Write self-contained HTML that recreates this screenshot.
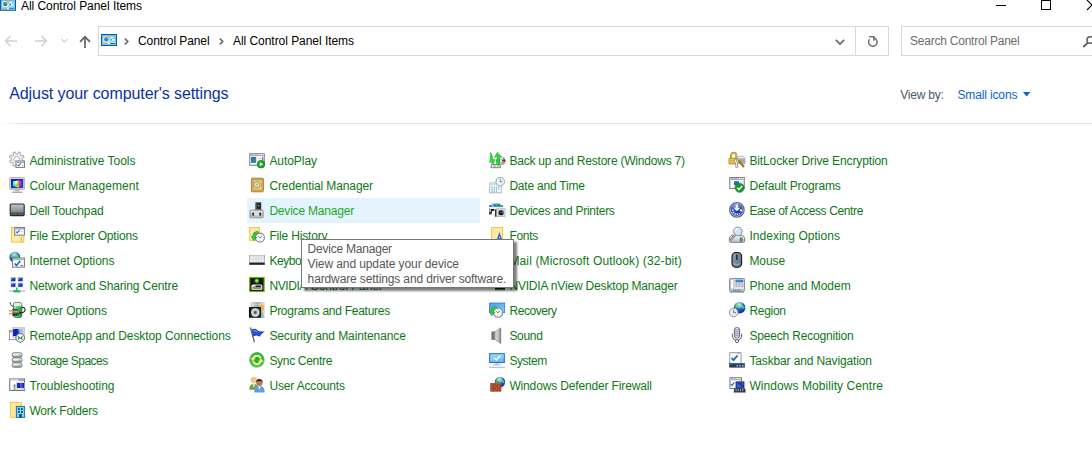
<!DOCTYPE html>
<html><head><meta charset="utf-8"><title>All Control Panel Items</title>
<style>
html,body{margin:0;padding:0;background:#fff;}
body{width:1092px;height:464px;position:relative;overflow:hidden;font-family:"Liberation Sans",sans-serif;font-size:12px;}
.t{position:absolute;white-space:pre;line-height:14px;height:14px;}
.it{color:#0e7816;}
.ic{position:absolute;width:16px;height:16px;overflow:visible;}
.abs{position:absolute;}
</style></head><body>

<svg width="0" height="0" style="position:absolute"><defs>
<linearGradient id="cpg" x1="0" y1="0" x2="0" y2="1"><stop offset="0" stop-color="#7cc8fa"/><stop offset="1" stop-color="#b9e3fd"/></linearGradient>
<radialGradient id="gl" cx="0.45" cy="0.3" r="0.75"><stop offset="0" stop-color="#5cc0ff"/><stop offset="0.5" stop-color="#1c54dc"/><stop offset="1" stop-color="#0a2490"/></radialGradient><radialGradient id="glh" cx="0.45" cy="0.22" r="0.4"><stop offset="0" stop-color="#fff" stop-opacity="0.7"/><stop offset="1" stop-color="#fff" stop-opacity="0"/></radialGradient>
</defs></svg>
<!-- title bar icon -->
<svg class="abs" style="left:0;top:0" width="16" height="11" viewBox="0 0 16 11"><g transform="translate(0 -1.2)"><rect x="0.5" y="0.5" width="15" height="11" fill="url(#cpg)" stroke="#0d5c9c"/><rect x="1.5" y="1.5" width="13" height="9" fill="none" stroke="#58b4f2" stroke-width="0.6"/><circle cx="5.3" cy="5.2" r="3" fill="#f4fbff"/><circle cx="5.3" cy="5.2" r="2.2" fill="#1b86de"/><path d="M5.6 4.8V1.9A3 3 0 0 1 8.5 4.8Z" fill="#fdb515"/><rect x="9.8" y="3" width="3.6" height="1.2" fill="#fff"/><rect x="12.2" y="3" width="1.2" height="1.2" fill="#f7941d"/><rect x="9.8" y="5.2" width="3.6" height="1.2" fill="#fff"/><rect x="9.8" y="5.2" width="1.2" height="1.2" fill="#1b86de"/><rect x="2" y="9" width="5" height="1" fill="#f7a21d"/><rect x="7" y="9" width="2" height="1" fill="#fff"/><rect x="9" y="9" width="5" height="1" fill="#1173d4"/></g></svg>
<!-- window buttons -->
<div class="abs" style="left:996px;top:5px;width:10px;height:1px;background:#000"></div>
<div class="abs" style="left:1041px;top:0;width:8px;height:8px;border:1px solid #000"></div>
<svg class="abs" style="left:1082px;top:0" width="10" height="12" viewBox="1082 0 10 12"><path d="M1087 0L1097 10M1087 10L1097 0" stroke="#000" stroke-width="1.1" fill="none"/></svg>
<!-- nav arrows -->
<svg class="abs" style="left:0;top:30px" width="98" height="22" viewBox="0 30 98 22">
<g fill="none" stroke="#d1d1d1" stroke-width="1.5"><path d="M5.5 41H17M10.5 36L5.5 41L10.5 46"/><path d="M35 41H46.5M41.5 36L46.5 41L41.5 46"/></g>
<path d="M61.5 39L64.5 42L67.5 39" fill="none" stroke="#d1d1d1" stroke-width="1.2"/>
<path d="M85 48V37M80 41.8L85 36.8L90 41.8" fill="none" stroke="#646464" stroke-width="1.7"/>
</svg>
<!-- address bar -->
<div class="abs" style="left:98px;top:26px;width:789px;height:28px;border:1px solid #d9d9d9;box-sizing:content-box"></div>
<div class="abs" style="left:855px;top:27px;width:1px;height:28px;background:#d9d9d9"></div>
<svg class="abs" style="left:101px;top:34px" width="16" height="12" viewBox="0 0 16 12"><g><rect x="0.5" y="0.5" width="15" height="11" fill="url(#cpg)" stroke="#0d5c9c"/><rect x="1.5" y="1.5" width="13" height="9" fill="none" stroke="#58b4f2" stroke-width="0.6"/><circle cx="5.3" cy="5.2" r="3" fill="#f4fbff"/><circle cx="5.3" cy="5.2" r="2.2" fill="#1b86de"/><path d="M5.6 4.8V1.9A3 3 0 0 1 8.5 4.8Z" fill="#fdb515"/><rect x="9.8" y="3" width="3.6" height="1.2" fill="#fff"/><rect x="12.2" y="3" width="1.2" height="1.2" fill="#f7941d"/><rect x="9.8" y="5.2" width="3.6" height="1.2" fill="#fff"/><rect x="9.8" y="5.2" width="1.2" height="1.2" fill="#1b86de"/><rect x="2" y="9" width="5" height="1" fill="#f7a21d"/><rect x="7" y="9" width="2" height="1" fill="#fff"/><rect x="9" y="9" width="5" height="1" fill="#1173d4"/></g></svg>
<svg class="abs" style="left:120px;top:34px" width="110" height="14" viewBox="120 34 110 14"><path d="M124.8 38.6L127.8 41.5L124.8 44.4" fill="none" stroke="#6a6a6a" stroke-width="1.6"/><path d="M219.8 38.6L222.8 41.5L219.8 44.4" fill="none" stroke="#6a6a6a" stroke-width="1.6"/></svg>
<svg class="abs" style="left:830px;top:30px" width="56" height="22" viewBox="830 30 56 22"><path d="M835.8 39.8L840 44L844.2 39.8" fill="none" stroke="#6a6a6a" stroke-width="1.7"/><path d="M873.8 37.8A4.3 4.3 0 1 1 869.6 39.2" fill="none" stroke="#6a6a6a" stroke-width="1.4"/><path d="M869.2 36.7H873.9V40.8" fill="none" stroke="#707070" stroke-width="1.6"/></svg>
<!-- search -->
<div class="abs" style="left:901px;top:26px;width:200px;height:28px;border:1px solid #d9d9d9"></div>
<svg class="abs" style="left:1080px;top:34px" width="12" height="14" viewBox="1080 34 12 14"><circle cx="1090.3" cy="40" r="3.3" fill="none" stroke="#5a5a5a" stroke-width="1.5"/><path d="M1087.8 42.6L1083.3 47" stroke="#5a5a5a" stroke-width="1.8"/></svg>
<!-- view by arrow -->
<svg class="abs" style="left:1020px;top:90px" width="12" height="8" viewBox="1020 90 12 8"><path d="M1023 92H1030.4L1026.7 96.6Z" fill="#0b64d0"/></svg>
<!-- separator -->
<div class="abs" style="left:0;top:123px;width:1092px;height:1px;background:linear-gradient(90deg,#fff 0,#dae6f4 24px,#dae6f4 100%)"></div>

<svg class="ic" style="left:9px;top:152px" viewBox="0 0 16 16"><path d="M12.92 5.84L15.22 6.11L15.22 8.29L12.92 8.56L12.38 9.86L13.82 11.67L12.27 13.22L10.46 11.78L9.16 12.32L8.89 14.62L6.71 14.62L6.44 12.32L5.14 11.78L3.33 13.22L1.78 11.67L3.22 9.86L2.68 8.56L0.38 8.29L0.38 6.11L2.68 5.84L3.22 4.54L1.78 2.73L3.33 1.18L5.14 2.62L6.44 2.08L6.71 -0.22L8.89 -0.22L9.16 2.08L10.46 2.62L12.27 1.18L13.82 2.73L12.38 4.54Z" fill="#f1f2f4" stroke="#a4aab2" stroke-width="0.9" transform="rotate(22.5 7.8 7.2)"/><circle cx="7.8" cy="7.2" r="2.7" fill="#fff" stroke="#a4aab2" stroke-width="0.9"/><rect x="7.05" y="9.05" width="8.4" height="6.4" fill="#fff" stroke="#7f838a" stroke-width="1.1"/><rect x="7.6" y="9.6" width="7.3" height="1.6" fill="#afb3ba"/><path d="M8.6 12.700000000000001L9.649999999999999 13.82L11.82 11.3" fill="none" stroke="#1b74c8" stroke-width="1.015"/><rect x="12.6" y="13" width="1.6" height="0.7" fill="#9aa0a8"/></svg>
<span class="t it" style="left:29.4px;top:153.84px;letter-spacing:-0.020px;">Administrative Tools</span>
<svg class="ic" style="left:9px;top:177px" viewBox="0 0 16 16"><defs><linearGradient id="cmA" x1="0" y1="0" x2="1" y2="0"><stop offset="0" stop-color="#22e8f0"/><stop offset="0.55" stop-color="#f4fff0"/><stop offset="1" stop-color="#ffa020"/></linearGradient><linearGradient id="cmB" x1="0.2" y1="0" x2="0.5" y2="1"><stop offset="0.35" stop-color="#30e030" stop-opacity="0"/><stop offset="0.8" stop-color="#40e828" stop-opacity="0.9"/><stop offset="1" stop-color="#f4f020"/></linearGradient><linearGradient id="cmC" x1="0" y1="0" x2="0" y2="1"><stop offset="0" stop-color="#f028f0"/><stop offset="1" stop-color="#e02030"/></linearGradient><linearGradient id="cmD" x1="0" y1="0" x2="1" y2="1"><stop offset="0" stop-color="#0a1ab0"/><stop offset="1" stop-color="#2a48e0"/></linearGradient></defs><rect x="0.600" y="0.600" width="15" height="12" rx="1" fill="#dad7cd" stroke="#b3b0a6" stroke-width="0.900"/><rect x="2" y="2" width="12.200" height="9.200" fill="url(#cmD)"/><path d="M3.900 4.200L9.900 3.500V10.400L3.900 8.800Z" fill="url(#cmA)"/><path d="M3.900 4.200L9.900 3.500V10.400L3.900 8.800Z" fill="url(#cmB)"/><path d="M9.900 3.500L12.300 4V8.600L9.900 10.400Z" fill="url(#cmC)"/><path d="M6.200 12.800h3.800l0.600 1.400h-5z" fill="#b4b1a8"/><path d="M3.600 14.200h9l1 1.400h-11z" fill="#c9c6bd"/><rect x="2.800" y="15.300" width="10.600" height="0.600" fill="#8f8c84"/></svg>
<span class="t it" style="left:29.4px;top:178.84px;letter-spacing:0.039px;">Colour Management</span>
<svg class="ic" style="left:9px;top:202px" viewBox="0 0 16 16"><defs><linearGradient id="tp1" x1="0" y1="0" x2="0" y2="1"><stop offset="0" stop-color="#c6c9ca"/><stop offset="0.6" stop-color="#8d9497"/><stop offset="1" stop-color="#444c50"/></linearGradient></defs><rect x="1.2" y="2" width="14" height="11.6" rx="1.2" fill="url(#tp1)" stroke="#1f2b30" stroke-width="1.1"/><path d="M1.5 11.2H15M8.2 11.2V13.4" stroke="#2a3438" stroke-width="0.6"/></svg>
<span class="t it" style="left:29.4px;top:203.84px;letter-spacing:-0.134px;">Dell Touchpad</span>
<svg class="ic" style="left:9px;top:227px" viewBox="0 0 16 16"><rect x="2.5" y="0.5" width="12.4" height="14.7" fill="#fde8a4" stroke="#f0c750"/><rect x="11.8" y="9.5" width="1.2" height="5.8" fill="#ecc04f"/><rect x="5.75" y="0.45000000000000007" width="9.700000000000001" height="7.700000000000001" fill="#fff" stroke="#7f838a" stroke-width="1.1"/><rect x="6.300000000000001" y="1.0" width="8.600000000000001" height="1.6" fill="#afb3ba"/><path d="M7.2 4.7L8.325 5.9L10.65 3.2" fill="none" stroke="#1b74c8" stroke-width="1.0875"/><rect x="12" y="4.5" width="1.8" height="0.7" fill="#9aa0a8"/></svg>
<span class="t it" style="left:29.4px;top:228.84px;letter-spacing:-0.174px;">File Explorer Options</span>
<svg class="ic" style="left:9px;top:252px" viewBox="0 0 16 16"><circle cx="5.8" cy="5.2" r="5.4" fill="url(#gl)"/><path d="M1.7499999999999991 2.77q1.62 -2.16 3.78 -2.16q0.27 2.16 -1.62 3.24q-0.54 2.43 -2.43 2.7q-0.81 -1.62 0.27 -3.78Z" fill="#2fc02c"/><path d="M7.42 2.2299999999999995q2.43 0.54 3.24 3.24q-1.89 1.62 -3.78 -0.27Z" fill="#3fd03c"/><circle cx="5.8" cy="5.2" r="5.4" fill="url(#glh)"/><rect x="3.55" y="6.05" width="11.9" height="9.1" fill="#fff" stroke="#7f838a" stroke-width="1.1"/><rect x="4.1" y="6.6" width="10.8" height="1.6" fill="#afb3ba"/><path d="M5.6 11.5L7.475 13.5L11.35 9" fill="none" stroke="#1b74c8" stroke-width="1.8125"/><rect x="11.400" y="13" width="2.600" height="0.900" fill="#6a5aa0"/></svg>
<span class="t it" style="left:29.4px;top:253.84px;letter-spacing:-0.018px;">Internet Options</span>
<svg class="ic" style="left:9px;top:277px" viewBox="0 0 16 16"><rect x="1.2" y="0" width="6" height="5" fill="#dde1e8"/><rect x="2.0" y="0.8" width="4.4" height="3.4" fill="#1a32c8"/><path d="M2.0 0.8h3l-3 2.4z" fill="#5d86ea"/><rect x="8.4" y="0" width="6" height="5" fill="#dde1e8"/><rect x="9.200000000000001" y="0.8" width="4.4" height="3.4" fill="#1a32c8"/><path d="M9.200000000000001 0.8h3l-3 2.4z" fill="#5d86ea"/><rect x="1.2" y="5.6" width="6" height="5" fill="#dde1e8"/><rect x="2.0" y="6.3999999999999995" width="4.4" height="3.4" fill="#1a32c8"/><path d="M2.0 6.3999999999999995h3l-3 2.4z" fill="#5d86ea"/><rect x="8.4" y="5.6" width="6" height="5" fill="#dde1e8"/><rect x="9.200000000000001" y="6.3999999999999995" width="4.4" height="3.4" fill="#1a32c8"/><path d="M9.200000000000001 6.3999999999999995h3l-3 2.4z" fill="#5d86ea"/><rect x="0" y="13.3" width="16" height="1.6" fill="#c9ced4"/><path d="M7 10.6h1.6v2.4h2.6v2.4H4.4v-2.4H7z" fill="#1fbf63"/></svg>
<span class="t it" style="left:29.4px;top:278.84px;letter-spacing:-0.109px;">Network and Sharing Centre</span>
<svg class="ic" style="left:9px;top:302px" viewBox="0 0 16 16"><defs><linearGradient id="pw1" x1="0" y1="0" x2="1" y2="0"><stop offset="0" stop-color="#38b046"/><stop offset="0.18" stop-color="#b4f0b4"/><stop offset="0.4" stop-color="#4ccc58"/><stop offset="1" stop-color="#1f9a30"/></linearGradient><linearGradient id="pw2" x1="0" y1="0" x2="0" y2="1"><stop offset="0" stop-color="#3a3a3a"/><stop offset="0.35" stop-color="#a4a4a4"/><stop offset="0.7" stop-color="#4a4a4a"/><stop offset="1" stop-color="#151515"/></linearGradient></defs><path d="M1 0.400q0.200 2.400 1.800 3.200q1.400 0.600 2.200 1.400" fill="none" stroke="#222" stroke-width="0.900"/><rect x="4.300" y="0.400" width="8.600" height="15.200" rx="2.800" fill="url(#pw1)" stroke="#1c5e26" stroke-width="0.700"/><path d="M4.700 4.200v-1.200q0 -2.300 2.600 -2.300h2.600q2.600 0 2.600 2.300v1.200z" fill="#ece8f6"/><path d="M4.700 4.200h7.800" stroke="#8fd09a" stroke-width="0.500"/><path d="M10 10.600q3.400 0.800 5.600 -1.200q1.200 -1.800 -0.200 -3.400q-1 -0.800 -2.400 -0.800" fill="none" stroke="#222" stroke-width="1.100"/><path d="M3.700 7.300h3.400q2.200 0.600 3.600 2.400v1.600q-1.400 1.800 -3.600 2.300h-3.400z" fill="url(#pw2)" stroke="#1a1a1a" stroke-width="0.500"/><rect x="0" y="8.100" width="3.700" height="1.400" fill="#e4ac10"/><rect x="0" y="11" width="3.700" height="1.400" fill="#e4ac10"/><path d="M0 9.300h3.700M0 12.200h3.700" stroke="#b9c4e0" stroke-width="0.400"/></svg>
<span class="t it" style="left:29.4px;top:303.84px;letter-spacing:-0.100px;">Power Options</span>
<svg class="ic" style="left:9px;top:327px" viewBox="0 0 16 16"><defs><linearGradient id="ra1" x1="0" y1="0" x2="1" y2="0"><stop offset="0" stop-color="#0c1cb8"/><stop offset="0.45" stop-color="#1a34d0"/><stop offset="0.55" stop-color="#7fa8f4"/><stop offset="1" stop-color="#b4d2fc"/></linearGradient></defs><rect x="0.400" y="3.600" width="7" height="9" fill="#fff" stroke="#7d869c" stroke-width="0.900"/><rect x="0.900" y="4.100" width="6" height="1.600" fill="#8fa2c4"/><rect x="3.300" y="0.200" width="12.500" height="10.200" fill="#d9d8d0" stroke="#b9b8b0" stroke-width="0.500"/><rect x="4.200" y="2" width="10.400" height="7" fill="url(#ra1)"/><path d="M4.200 2h4.600l1.400 3.400l-1.600 3.600h-4.400z" fill="#0c1cb8" opacity="0.600"/><circle cx="11.200" cy="10.900" r="4.300" fill="#fbfbfb" stroke="#66696e" stroke-width="1"/><path d="M8.800 9.400l1.700 1.500l-1.700 1.500M13.600 9.400l-1.700 1.500l1.700 1.500" fill="none" stroke="#1b8a1e" stroke-width="1.200"/></svg>
<span class="t it" style="left:29.4px;top:328.84px;letter-spacing:-0.086px;">RemoteApp and Desktop Connections</span>
<svg class="ic" style="left:9px;top:352px" viewBox="0 0 16 16"><defs><linearGradient id="dk" x1="0" y1="0" x2="0" y2="1"><stop offset="0" stop-color="#ffffff"/><stop offset="0.5" stop-color="#e4e6e9"/><stop offset="1" stop-color="#84898f"/></linearGradient></defs><rect x="3.2" y="0.8" width="9.8" height="4.4" rx="1.8" fill="url(#dk)" stroke="#666c73" stroke-width="0.900"/><rect x="9.8" y="2.6" width="1.8" height="1" fill="#2fd23a"/><rect x="3.2" y="5.8" width="9.8" height="4.4" rx="1.8" fill="url(#dk)" stroke="#666c73" stroke-width="0.900"/><rect x="9.8" y="7.6" width="1.8" height="1" fill="#2fd23a"/><rect x="3.2" y="10.8" width="9.8" height="4.4" rx="1.8" fill="url(#dk)" stroke="#666c73" stroke-width="0.900"/><rect x="9.8" y="12.600000000000001" width="1.8" height="1" fill="#2fd23a"/></svg>
<span class="t it" style="left:29.4px;top:353.84px;letter-spacing:-0.499px;">Storage Spaces</span>
<svg class="ic" style="left:9px;top:377px" viewBox="0 0 16 16"><rect x="0.750" y="1.950" width="14.700" height="11.500" fill="#fff" stroke="#73777f" stroke-width="1.100"/><rect x="1.300" y="2.500" width="13.600" height="1.500" fill="#dde1e8"/><g fill="#3d5a8c"><rect x="9.800" y="2.600" width="1.100" height="1.200"/><rect x="11.600" y="2.600" width="1.100" height="1.200"/><rect x="13.400" y="2.600" width="1.100" height="1.200"/></g><rect x="7.100" y="5.200" width="8.300" height="7.700" fill="#d3d2c6"/><rect x="8" y="6" width="7" height="5" fill="#1628c8"/><path d="M10.600 6h2.200l1.200 5h-2.600z" fill="#4f74e8" opacity="0.700"/><rect x="7.800" y="11.600" width="5" height="0.800" fill="#f4f4f0"/><rect x="4.500" y="7.400" width="2.100" height="5.600" rx="0.600" fill="#a4a7ad"/><rect x="4.900" y="7.600" width="1.300" height="1" fill="#5a5470"/><rect x="4.900" y="8.700" width="1.300" height="1.400" fill="#2fe23a"/></svg>
<span class="t it" style="left:29.4px;top:378.84px;letter-spacing:-0.035px;">Troubleshooting</span>
<svg class="ic" style="left:9px;top:402px" viewBox="0 0 16 16"><rect x="1.4" y="0.5" width="11" height="14.8" fill="#fde8a4" stroke="#f0c750"/><g transform="translate(0 -2)"><rect x="7.4" y="6.4" width="8.2" height="11" fill="#7fd2f6" stroke="#1c76a8" stroke-width="1"/><rect x="9" y="8.2" width="1.8" height="1.8" fill="#0f4a74"/><rect x="12" y="8.2" width="1.8" height="1.8" fill="#0f4a74"/><rect x="9" y="11" width="1.8" height="1.8" fill="#0f4a74"/><rect x="12" y="11" width="1.8" height="1.8" fill="#0f4a74"/><rect x="10.2" y="14" width="2.6" height="3.4" fill="#0f4a74"/></g></svg>
<span class="t it" style="left:29.4px;top:403.84px;letter-spacing:-0.237px;">Work Folders</span>
<svg class="ic" style="left:249px;top:152px" viewBox="0 0 16 16"><defs><linearGradient id="ap1" x1="0" y1="0" x2="1" y2="1"><stop offset="0" stop-color="#2d62c4"/><stop offset="1" stop-color="#3e9a7a"/></linearGradient></defs><rect x="0.75" y="1.75" width="14.5" height="11.5" fill="#fff" stroke="#7f838a" stroke-width="1.1"/><rect x="1.3" y="2.3" width="13.399999999999999" height="2" fill="#afb3ba"/><rect x="9.6" y="2" width="1" height="0.9" fill="#fff"/><rect x="11.4" y="2" width="1" height="0.9" fill="#fff"/><rect x="13.2" y="2" width="1" height="0.9" fill="#fff"/><rect x="2" y="5" width="5.2" height="6" fill="url(#ap1)"/><rect x="8.6" y="6" width="4" height="0.8" fill="#b8bdc5"/><rect x="13.2" y="5" width="0.9" height="4" fill="#3b63b8"/><circle cx="12" cy="12.2" r="3.9" fill="#23a02e"/><circle cx="12" cy="12.2" r="3.9" fill="none" stroke="#157a20" stroke-width="0.5"/><path d="M10.8 10.2v4l3.3-2z" fill="#fff"/></svg>
<span class="t it" style="left:269.4px;top:153.84px;letter-spacing:-0.054px;">AutoPlay</span>
<svg class="ic" style="left:249px;top:177px" viewBox="0 0 16 16"><g transform="translate(0 -1.4)"><rect x="2.4" y="2.6" width="12" height="13.6" rx="0.8" fill="#d8b457" stroke="#a9832f" stroke-width="1"/><rect x="4" y="4.2" width="8.8" height="10.4" fill="#e4c672" stroke="#b8933c" stroke-width="0.7"/><circle cx="7.9" cy="9" r="2.9" fill="#e9e4d6" stroke="#9c8a62" stroke-width="0.8"/><circle cx="7.9" cy="9" r="1.1" fill="#b9ad90"/><rect x="11.6" y="5.4" width="1" height="1.4" fill="#f6eccc"/><rect x="11.6" y="12" width="1" height="1.4" fill="#f6eccc"/></g></svg>
<span class="t it" style="left:269.4px;top:178.84px;letter-spacing:-0.100px;">Credential Manager</span>
<div class="abs" style="left:247px;top:198px;width:233px;height:25px;background:#e5f3ff"></div>
<svg class="ic" style="left:249px;top:202px" viewBox="0 0 16 16"><rect x="6.6" y="0.4" width="5.6" height="7.6" fill="#2b2b2b"/><rect x="6.6" y="0.4" width="1.4" height="7.6" fill="#555"/><rect x="9" y="3" width="1.2" height="1.2" fill="#36e04a"/><path d="M5 7.4h8.6v1.2h-8.6z" fill="#8d8d8d"/><rect x="1" y="8.2" width="13.2" height="7.6" rx="0.6" fill="#bdbdbd" stroke="#8b8b8b" stroke-width="0.8"/><rect x="1.6" y="8.8" width="12" height="2.2" fill="#dedede"/><rect x="3.4" y="10.6" width="1.6" height="3" fill="#262626"/><rect x="10.4" y="10.6" width="1.6" height="3" fill="#262626"/><rect x="5.6" y="11.4" width="4.2" height="1.8" fill="#e8e8e8"/></svg>
<span class="t it" style="left:269.4px;top:203.84px;letter-spacing:-0.198px;color:#18ab18;">Device Manager</span>
<svg class="ic" style="left:249px;top:227px" viewBox="0 0 16 16"><rect x="0.6" y="0.5" width="9.8" height="12.9" fill="#fde8a4" stroke="#f0c750"/><circle cx="10.9" cy="10.6" r="4.5" fill="#f7f8f9" stroke="#858b92" stroke-width="1.100"/><path d="M9.3 9.4L10.9 10.799999999999999L12.9 9.0" fill="none" stroke="#4b525a" stroke-width="0.800"/><path d="M10.9 7.3v0.700M10.9 13.2v0.700M7.6000000000000005 10.6h0.700M13.5 10.6h0.700" stroke="#8d939a" stroke-width="0.600"/><path d="M9.30 5.30Q4.50 5.80 4.90 10.40" stroke="#1c8f27" stroke-width="2.800" fill="none"/><path d="M1.90 9.20L8.10 10.20L4.50 14.10Z" fill="#1c8f27"/><path d="M9.30 5.30Q4.50 5.80 4.90 10.40" stroke="#3ad044" stroke-width="1.800" fill="none"/><path d="M2.90 9.70L7.10 10.40L4.60 13.20Z" fill="#3ad044"/></svg>
<span class="t it" style="left:269.4px;top:228.84px;letter-spacing:-0.168px;">File History</span>
<svg class="ic" style="left:249px;top:252px" viewBox="0 0 16 16"><defs><linearGradient id="kb1" x1="0" y1="0" x2="0" y2="1"><stop offset="0" stop-color="#bfc4c9"/><stop offset="1" stop-color="#dfe2e5"/></linearGradient></defs><rect x="0.2" y="3" width="15.6" height="9.8" fill="#1d2124"/><rect x="0.2" y="3" width="15.6" height="7.6" fill="url(#kb1)"/><g fill="#fff"><rect x="1.4" y="4.4" width="13.2" height="1.2"/><rect x="1.4" y="6.2" width="13.2" height="1.2"/><rect x="1.4" y="8" width="13.2" height="1.2"/></g><g stroke="#c4c9ce" stroke-width="0.5"><path d="M3 4.4v4.8M4.6 4.4v4.8M6.2 4.4v4.8M7.8 4.4v4.8M9.4 4.4v4.8M11 4.4v4.8M12.6 4.4v4.8"/></g></svg>
<span class="t it" style="left:269.4px;top:253.84px;letter-spacing:-0.440px;">Keyboard</span>
<svg class="ic" style="left:249px;top:277px" viewBox="0 0 16 16"><g transform="translate(0 -1)"><defs><radialGradient id="nv1" cx="0.5" cy="0.5" r="0.5"><stop offset="0" stop-color="#c8ff8a"/><stop offset="0.4" stop-color="#4fd02a"/><stop offset="1" stop-color="#111" stop-opacity="0"/></radialGradient></defs><rect x="0.7" y="1.5" width="14.4" height="14" fill="#141414" stroke="#6fb400" stroke-width="1.2"/><circle cx="7.8" cy="4.8" r="3.6" fill="url(#nv1)"/><rect x="2.4" y="8.4" width="11" height="5.6" rx="1.6" fill="#e6e6e6"/><rect x="3.4" y="10.6" width="9" height="2.6" rx="1.2" fill="#8e8e8e"/><rect x="6.4" y="9.4" width="5.8" height="1.6" rx="0.8" fill="#1c1c1c"/></g></svg>
<span class="t it" style="left:269.4px;top:278.84px;letter-spacing:-0.117px;"><span style="letter-spacing:-0.42px">NVIDIA</span> Control Panel</span>
<svg class="ic" style="left:249px;top:302px" viewBox="0 0 16 16"><defs><linearGradient id="pf1" x1="0" y1="0" x2="1" y2="0"><stop offset="0" stop-color="#e4e4e4"/><stop offset="0.5" stop-color="#a9a9a9"/><stop offset="1" stop-color="#e4e4e4"/></linearGradient></defs><rect x="1.600" y="1.600" width="14" height="14.100" fill="#d3d5d1"/><path d="M5 3.400q3.600 -1.800 6.400 0.400q1.600 6 4 11.900h-5z" fill="#8fc096"/><rect x="1.300" y="0" width="14.600" height="1.900" fill="url(#pf1)"/><circle cx="12.100" cy="5.800" r="3" fill="#f6ab3c"/><rect x="0" y="5.100" width="11.900" height="10.600" fill="#050505"/><rect x="1.600" y="6" width="9.600" height="9" fill="#2b3a48"/><circle cx="6.300" cy="10.500" r="4.200" fill="#dfe3e3"/><circle cx="6.300" cy="10.500" r="3" fill="#c3c9ca"/><circle cx="6.300" cy="10.500" r="1.400" fill="#46525e"/></svg>
<span class="t it" style="left:269.4px;top:303.84px;letter-spacing:-0.260px;">Programs and Features</span>
<svg class="ic" style="left:249px;top:327px" viewBox="0 0 16 16"><path d="M1.500 1L5.500 15.400" stroke="#5f666e" stroke-width="1.300"/><circle cx="1.500" cy="1.200" r="1" fill="#8a9097"/><g transform="translate(0.300 0.900)"><path d="M2.200 1.400q3.200 -1.600 5.600 0.600q3 2.600 7.800 1q-3.400 2.800 -5.400 5.800q-3.600 -2.600 -6.200 0z" fill="#1a3ec2"/><path d="M3 2.200q2.600 -1 4.400 0.600q1.400 1.400 3.400 1.700q-3 0.300 -5.200 -0.700q-1.400 -0.700 -2.300 -0.400z" fill="#5d82ea"/><path d="M3.400 5.600q2.400 -1.200 4.600 0.200q1.600 0.900 3.400 0.500" fill="none" stroke="#6f90ee" stroke-width="0.500"/></g></svg>
<span class="t it" style="left:269.4px;top:328.84px;letter-spacing:-0.098px;">Security and Maintenance</span>
<svg class="ic" style="left:249px;top:352px" viewBox="0 0 16 16"><defs><radialGradient id="sy1" cx="0.5" cy="0.45" r="0.55"><stop offset="0" stop-color="#2fa440"/><stop offset="0.75" stop-color="#3cb84c"/><stop offset="1" stop-color="#7ed68a"/></radialGradient></defs><circle cx="7.900" cy="7.900" r="7.800" fill="url(#sy1)"/><g fill="none" stroke="#f3ef7c" stroke-width="2"><path d="M11.700 6.400a3.900 3.900 0 0 0 -7.400 -0.200"/><path d="M4.100 9.400a3.900 3.900 0 0 0 7.400 0.200"/></g><path d="M1.300 5.800h5.400l-2.700 3.700z" fill="#f3ef7c"/><path d="M14.500 10h-5.400l2.700 -3.700z" fill="#f3ef7c"/></svg>
<span class="t it" style="left:269.4px;top:353.84px;letter-spacing:-0.312px;">Sync Centre</span>
<svg class="ic" style="left:249px;top:377px" viewBox="0 0 16 16"><g transform="translate(0 -1.2)"><path d="M0.400 14q-0.200 -4.400 2.400 -5.600h4q2.400 1.200 2.400 5.600z" fill="#6fa24a"/><path d="M3.600 8.600l1.300 3.400l1.300 -3.400z" fill="#eef2e6"/><circle cx="4.900" cy="4.800" r="3" fill="#f0c9a0"/><path d="M1.800 5.200q-0.400 -4 3.200 -3.800q3.200 0.200 2.900 3.400q-1.200 -2 -3 -1.800q-2 0.200 -3.100 2.200z" fill="#d9bf6a"/><path d="M5.200 16.600q-0.200 -5.200 3 -6.200h4.400q3 1 3 6.200z" fill="#5f9fe0"/><path d="M9 10.400l1.400 3.800l1.400 -3.800z" fill="#eaf2fb"/><circle cx="10.400" cy="7" r="3.200" fill="#b9794e"/><path d="M7.200 7q-0.400 -3.800 3.200 -3.700q3.400 0.100 3.200 3.500q-0.600 -1.400 -1.600 -1.800q-2 0.800 -3.600 0.200q-0.800 0.600 -1.200 1.800z" fill="#2a241f"/></g></svg>
<span class="t it" style="left:269.4px;top:378.84px;letter-spacing:-0.152px;">User Accounts</span>
<svg class="ic" style="left:489px;top:152px" viewBox="0 0 16 16"><g transform="translate(-0.900 0)"><circle cx="12.8" cy="8.800" r="4.500" fill="#9a9da2"/><path d="M12.8 8.800L9.400 5.800A4.500 4.500 0 0 1 15.600 5.300Z" fill="#d9dadc"/><path d="M12.8 8.800L17 7.200A4.500 4.500 0 0 1 17.200 10Z" fill="#3a3c40"/><path d="M12.8 8.800L17.200 10A4.500 4.500 0 0 1 14.800 12.800Z" fill="#f08a44"/><path d="M12.8 8.800L14.800 12.800A4.500 4.500 0 0 1 11.400 13Z" fill="#9ec4ee"/><path d="M12.8 8.800L8.600 10.400A4.500 4.500 0 0 1 9.400 5.800Z" fill="#4a4c52"/><circle cx="12.8" cy="8.800" r="1.100" fill="#f2f2f2"/></g><path d="M2.600 12.400h8.200l0.800 3.300h-9.800z" fill="#f1f2f4" stroke="#5f656d" stroke-width="0.800"/><rect x="4" y="13.600" width="3" height="0.900" fill="#8d939a"/><rect x="8.200" y="13.800" width="1.200" height="1" fill="#2fd23a"/><path d="M1 0.400q2.600 1.400 2.400 4.200q-0.200 2 0.800 3.200l1.800 -0.800l-1.600 5.200l-4.400 -3l1.800 -0.600q-1.200 -2 -0.400 -4.400q0.600 -2 -0.400 -3.800z" fill="#2de02d" stroke="#1a9e1f" stroke-width="0.500"/><path d="M8.400 0.200l4 4.600l-2 -0.200q0.600 2.600 -0.200 4.800q-0.600 2 0 3.800l-2.400 -0.200q-0.600 -2 0.200 -4.200q0.600 -2.200 -0.200 -4.200l-2.400 0.800z" fill="#2de02d" stroke="#1a9e1f" stroke-width="0.500"/></svg>
<span class="t it" style="left:509.4px;top:153.84px;letter-spacing:-0.216px;">Back up and Restore (Windows 7)</span>
<svg class="ic" style="left:489px;top:177px" viewBox="0 0 16 16"><rect x="0.800" y="6" width="11.400" height="9.800" fill="#fff" stroke="#9aa3ad" stroke-width="0.8"/><rect x="1.200" y="6.400" width="10.600" height="2" fill="#bfe2f2"/><g fill="#5aa9d6"><rect x="2.400" y="9.600" width="1.300" height="1.200"/><rect x="4.600" y="9.600" width="1.300" height="1.200"/><rect x="6.800" y="9.600" width="1.300" height="1.200"/><rect x="9" y="9.600" width="1.300" height="1.200"/><rect x="2.400" y="11.600" width="1.300" height="1.200"/><rect x="4.600" y="11.600" width="1.300" height="1.200"/><rect x="6.800" y="11.600" width="1.300" height="1.200"/><rect x="9" y="11.600" width="1.300" height="1.200"/><rect x="2.400" y="13.600" width="1.300" height="1.200"/><rect x="4.600" y="13.600" width="1.300" height="1.200"/><rect x="6.800" y="13.600" width="1.300" height="1.200"/></g><circle cx="11.2" cy="4.600" r="4.300" fill="#eef3f8" stroke="#9099a3" stroke-width="0.9"/><path d="M11.2 1.800V4.800H13.400" fill="none" stroke="#59616a" stroke-width="0.8"/></svg>
<span class="t it" style="left:509.4px;top:178.84px;letter-spacing:-0.204px;">Date and Time</span>
<svg class="ic" style="left:489px;top:202px" viewBox="0 0 16 16"><rect x="0" y="3.200" width="14" height="2" fill="#5a5d61"/><rect x="2.800" y="1.700" width="8.400" height="3.500" fill="#1a7ae8"/><rect x="2.800" y="1.700" width="1.800" height="3.500" fill="#74bdf8"/><rect x="6.800" y="1.700" width="1.900" height="3.500" fill="#20c040"/><rect x="11.8" y="3.800" width="1.200" height="1.100" fill="#2fe23a"/><rect x="0.400" y="5.100" width="13.400" height="7.100" fill="#eceded" stroke="#b4b7bb" stroke-width="0.800"/><rect x="0" y="5.100" width="14" height="1" fill="#f8f8f9"/><rect x="0" y="6.100" width="0.800" height="6.100" fill="#9a9da2"/><rect x="1.700" y="7" width="3.600" height="1.900" fill="#141414"/><rect x="1.700" y="8.800" width="1.300" height="2" fill="#141414"/><rect x="0" y="10" width="2.600" height="2.200" fill="#3a3d42"/><rect x="3" y="9" width="3" height="4.200" fill="#fbfbfb"/><rect x="3" y="12.600" width="3" height="0.600" fill="#c9cbce"/><rect x="6" y="7.300" width="1.800" height="7.500" fill="#333538"/><rect x="7.800" y="6.800" width="8.200" height="7.800" fill="#e4e5e6" stroke="#a4a6a9" stroke-width="0.700"/><rect x="8.900" y="7.900" width="6" height="5.600" fill="#b9babc"/><circle cx="12.100" cy="10.700" r="2.500" fill="#17191b"/><path d="M12.100 10.700L13.600 9A2.300 2.300 0 0 1 14.300 11.400Z" fill="#2f8f96"/><circle cx="11.500" cy="10.100" r="0.600" fill="#555a5e"/></svg>
<span class="t it" style="left:509.4px;top:203.84px;letter-spacing:-0.276px;">Devices and Printers</span>
<svg class="ic" style="left:489px;top:227px" viewBox="0 0 16 16"><rect x="2.5" y="0.5" width="11" height="14.8" fill="#fde8a4" stroke="#f0c750"/><path d="M7.800 14.400l2.600 -7.400l2.600 7.400M8.800 12h3.400" fill="none" stroke="#1a63d6" stroke-width="1.300"/></svg>
<span class="t it" style="left:509.4px;top:228.84px;letter-spacing:-0.283px;">Fonts</span>
<svg class="ic" style="left:489px;top:252px" viewBox="0 0 16 16"><rect x="1" y="3" width="14" height="10" fill="#f4e8b8" stroke="#b89a40" stroke-width="0.8"/><path d="M1 3l7 6l7-6" fill="none" stroke="#b89a40" stroke-width="0.8"/></svg>
<span class="t it" style="left:509.4px;top:253.84px;letter-spacing:0.138px;">Mail (Microsoft Outlook) (32-bit)</span>
<svg class="ic" style="left:489px;top:277px" viewBox="0 0 16 16"><rect x="6" y="2" width="10" height="11" fill="#1a1a1a"/><rect x="6" y="12" width="10" height="1.2" fill="#4f8a00"/></svg>
<span class="t it" style="left:509.4px;top:278.84px;letter-spacing:-0.175px;">NVIDIA nView Desktop Manager</span>
<svg class="ic" style="left:489px;top:302px" viewBox="0 0 16 16"><defs><linearGradient id="rc1" x1="0" y1="0" x2="1" y2="1"><stop offset="0" stop-color="#3f9cf0"/><stop offset="1" stop-color="#8ccbf9"/></linearGradient></defs><rect x="0.600" y="1" width="15" height="9.600" fill="url(#rc1)" stroke="#2b7fd6" stroke-width="0.800"/><circle cx="9" cy="10.6" r="4.7" fill="#f7f8f9" stroke="#858b92" stroke-width="1.100"/><path d="M7.4 9.4L9 10.799999999999999L11 9.0" fill="none" stroke="#4b525a" stroke-width="0.800"/><path d="M9 7.1v0.700M9 13.4v0.700M5.5 10.6h0.700M11.799999999999999 10.6h0.700" stroke="#8d939a" stroke-width="0.600"/><path d="M7.40 5.30Q2.60 5.80 3.00 10.40" stroke="#1c8f27" stroke-width="2.800" fill="none"/><path d="M0.00 9.20L6.20 10.20L2.60 14.10Z" fill="#1c8f27"/><path d="M7.40 5.30Q2.60 5.80 3.00 10.40" stroke="#3ad044" stroke-width="1.800" fill="none"/><path d="M1.00 9.70L5.20 10.40L2.70 13.20Z" fill="#3ad044"/></svg>
<span class="t it" style="left:509.4px;top:303.84px;letter-spacing:-0.423px;">Recovery</span>
<svg class="ic" style="left:489px;top:327px" viewBox="0 0 16 16"><defs><linearGradient id="sd1" x1="0" y1="0" x2="1" y2="0"><stop offset="0" stop-color="#e4e5e6"/><stop offset="0.7" stop-color="#b4b6b8"/><stop offset="1" stop-color="#6a6d70"/></linearGradient></defs><rect x="2.800" y="4.800" width="3.400" height="7.800" fill="#9a9c9f" stroke="#6b6e72" stroke-width="0.6"/><rect x="3.400" y="5.200" width="1" height="7" fill="#55585c"/><path d="M6 5L11.800 0.800V16.600L6 12.400z" fill="url(#sd1)" stroke="#6b6e72" stroke-width="0.5"/></svg>
<span class="t it" style="left:509.4px;top:328.84px;letter-spacing:-0.321px;">Sound</span>
<svg class="ic" style="left:489px;top:352px" viewBox="0 0 16 16"><rect x="0.700" y="1.700" width="14.600" height="8.800" fill="#6bbef6" stroke="#1f74cc" stroke-width="1.100"/><path d="M1.200 2.200h13.600v4q-7 0 -13.600 3z" fill="#9bd5fa" opacity="0.7"/><path d="M5.400 6l1.900 2l4 -4.400" fill="none" stroke="#fff" stroke-width="1.400"/><rect x="6.400" y="11" width="3.200" height="1.400" fill="#b9c6d4"/><rect x="4.200" y="12.400" width="7.600" height="0.900" fill="#9fb0c2"/><rect x="0.200" y="14.800" width="15.600" height="1" fill="#a9b7c6"/></svg>
<span class="t it" style="left:509.4px;top:353.84px;letter-spacing:-0.453px;">System</span>
<svg class="ic" style="left:489px;top:377px" viewBox="0 0 16 16"><circle cx="11" cy="5" r="5.2" fill="url(#gl)"/><path d="M7.1 2.6599999999999997q1.56 -2.08 3.6399999999999997 -2.08q0.26 2.08 -1.56 3.12q-0.52 2.3400000000000003 -2.3400000000000003 2.6q-0.78 -1.56 0.26 -3.6399999999999997Z" fill="#2fc02c"/><path d="M12.56 2.1399999999999997q2.3400000000000003 0.52 3.12 3.12q-1.8199999999999998 1.56 -3.6399999999999997 -0.26Z" fill="#3fd03c"/><circle cx="11" cy="5" r="5.2" fill="url(#glh)"/><rect x="1.300" y="6" width="11" height="8.600" fill="#93351a"/><g stroke="#c98260" stroke-width="0.500" fill="none"><path d="M1.300 8.200h11M1.300 10.400h11M1.300 12.600h11"/><path d="M4 6v2.200M7.600 6v2.200M10.600 6v2.200M2.600 8.200v2.200M6 8.200v2.200M9.400 8.200v2.200M4 10.400v2.200M7.600 10.400v2.200M10.600 10.400v2.200M2.600 12.600v2M6 12.600v2M9.400 12.600v2"/></g><path d="M1.300 6h11v0.700h-11z" fill="#c9623a"/></svg>
<span class="t it" style="left:509.4px;top:378.84px;letter-spacing:-0.147px;">Windows Defender Firewall</span>
<svg class="ic" style="left:729px;top:152px" viewBox="0 0 16 16"><path d="M8.600 4.200h5.600l1.800 2v5.600h-7.600z" fill="#ececee" stroke="#a9abb2" stroke-width="0.700"/><path d="M9.400 6.400h6.600v5.400h-6.600z" fill="#a9abb4"/><rect x="10.900" y="7.400" width="1.100" height="3.200" fill="#35e03a"/><path d="M2 6.600V3.600q0 -2.900 2.600 -2.900q2.600 0 2.600 2.900V6.600" fill="none" stroke="#b98a18" stroke-width="1.900"/><path d="M2 6.600V3.600q0 -2.900 2.600 -2.900q2.600 0 2.600 2.900V6.600" fill="none" stroke="#f0cf6a" stroke-width="0.700"/><rect x="-0.100" y="6.100" width="8.400" height="6" rx="0.600" fill="#dba51e" stroke="#a87a12" stroke-width="0.600"/><path d="M0.200 7.400h7.800M0.200 9.100h7.800M0.200 10.800h7.800" stroke="#f6d463" stroke-width="0.800"/><path d="M6 6.800l1.600 1l1.600 -1l0.400 2.600l-1.200 1.200l0.400 4.600l-1.800 0.600l-0.600 -5.200l-1.200 -1.200z" fill="#eef0f2" stroke="#7d838b" stroke-width="0.700"/><path d="M7.600 8.200v1.200" stroke="#c48a22" stroke-width="1.200"/><path d="M9.400 8.600L15 15" stroke="#8a6410" stroke-width="2"/><path d="M9.400 8.600L15 15" stroke="#d9a520" stroke-width="1" stroke-dasharray="1 0.600"/></svg>
<span class="t it" style="left:749.4px;top:153.84px;letter-spacing:-0.123px;">BitLocker Drive Encryption</span>
<svg class="ic" style="left:729px;top:177px" viewBox="0 0 16 16"><rect x="0.75" y="0.55" width="14.5" height="10.9" fill="#fff" stroke="#7f838a" stroke-width="1.1"/><rect x="1.3" y="1.1" width="13.399999999999999" height="2" fill="#afb3ba"/><rect x="10" y="0.900" width="1" height="0.900" fill="#fff"/><rect x="11.8" y="0.900" width="1" height="0.900" fill="#fff"/><rect x="13.6" y="0.900" width="1" height="0.900" fill="#fff"/><rect x="5" y="4.200" width="5" height="4" fill="#2a62d6"/><rect x="11" y="4.600" width="2.600" height="0.800" fill="#b8bdc5"/><circle cx="10.600" cy="10.800" r="4.600" fill="#18962a"/><circle cx="10.600" cy="10.800" r="4.600" fill="none" stroke="#0f7a1e" stroke-width="0.5"/><path d="M8.200 10.800l1.800 1.900l3.200 -3.600" fill="none" stroke="#fff" stroke-width="1.500"/></svg>
<span class="t it" style="left:749.4px;top:178.84px;letter-spacing:-0.130px;">Default Programs</span>
<svg class="ic" style="left:729px;top:202px" viewBox="0 0 16 16"><circle cx="7.900" cy="7.900" r="7.200" fill="#fbfbfc" stroke="#62656c" stroke-width="1.300"/><circle cx="7.900" cy="7.900" r="6.100" fill="#2247d2" stroke="#8f94a6" stroke-width="0.500"/><circle cx="7.900" cy="7.900" r="6" fill="url(#glh)"/><path d="M7.100 2.600h1.700v3.300h2.100l-2.950 3.300l-2.950 -3.300h2.100z" fill="#fff"/><path d="M3.700 7.600a4.300 4.300 0 0 0 7 3.800" fill="none" stroke="#fff" stroke-width="1.500" stroke-dasharray="1.300 1"/><circle cx="12.100" cy="8.400" r="1.150" fill="#fff"/><path d="M7.400 9l3.400 1.800" stroke="#10289a" stroke-width="1.100"/></svg>
<span class="t it" style="left:749.4px;top:203.84px;letter-spacing:-0.372px;">Ease of Access Centre</span>
<svg class="ic" style="left:729px;top:227px" viewBox="0 0 16 16"><defs><linearGradient id="ix1" x1="0" y1="0" x2="0" y2="1"><stop offset="0" stop-color="#f0f0f4"/><stop offset="0.5" stop-color="#d9dae2"/><stop offset="1" stop-color="#b9bac4"/></linearGradient></defs><path d="M2.400 8.300h11.200l2 2.400v3.600q0 1 -1 1h-13.200q-1 0 -1 -1v-3.600z" fill="url(#ix1)" stroke="#73757e" stroke-width="0.900"/><rect x="10.800" y="10.400" width="2.800" height="4" rx="0.500" fill="#55575f"/><rect x="11.700" y="10.600" width="1" height="3.600" fill="#3fe23a"/><path d="M6 8L1.400 13.400" stroke="#5f626a" stroke-width="2"/><path d="M6 8L1.400 13.400" stroke="#f2f3f5" stroke-width="0.800"/><circle cx="8.900" cy="4.400" r="4.300" fill="#cfe4f8" stroke="#8a8c95" stroke-width="1"/><path d="M6.200 4.400a2.800 2.800 0 0 1 3.400 -2.600" fill="none" stroke="#fff" stroke-width="1.100"/></svg>
<span class="t it" style="left:749.4px;top:228.84px;letter-spacing:0.034px;">Indexing Options</span>
<svg class="ic" style="left:729px;top:252px" viewBox="0 0 16 16"><defs><linearGradient id="ms1" x1="0" y1="0" x2="1" y2="1"><stop offset="0" stop-color="#8fa3b8"/><stop offset="1" stop-color="#586c82"/></linearGradient></defs><rect x="3" y="0.500" width="9.600" height="14.800" rx="3.800" fill="url(#ms1)" stroke="#141414" stroke-width="1.100"/><path d="M7.800 2.400v5.600" stroke="#1c1c1c" stroke-width="1.300"/><path d="M4.600 11.600q3.200 2.600 6.400 0" fill="none" stroke="#c9d4df" stroke-width="0.7"/></svg>
<span class="t it" style="left:749.4px;top:253.84px;letter-spacing:-0.086px;">Mouse</span>
<svg class="ic" style="left:729px;top:277px" viewBox="0 0 16 16"><rect x="0.500" y="1.500" width="15" height="13" rx="0.800" fill="#e6e8eb" stroke="#7f858c" stroke-width="0.9"/><rect x="1.400" y="2.200" width="3.400" height="10" rx="1" fill="#fbfbfc" stroke="#9aa0a7" stroke-width="0.7"/><rect x="6.400" y="2.600" width="8" height="2.800" fill="#2f86dc"/><g fill="#8d939a"><rect x="6.400" y="6.600" width="2" height="1.100"/><rect x="9.400" y="6.600" width="2" height="1.100"/><rect x="12.4" y="6.600" width="2" height="1.100"/><rect x="6.400" y="8.600" width="2" height="1.100"/><rect x="9.400" y="8.600" width="2" height="1.100"/><rect x="12.4" y="8.600" width="2" height="1.100"/></g><rect x="0.500" y="12" width="15" height="2.500" fill="#b9bec4"/><g fill="#2f86dc"><rect x="4" y="12.700" width="1.200" height="1.200"/><rect x="6" y="12.700" width="1.200" height="1.200"/><rect x="8" y="12.700" width="1.200" height="1.200"/><rect x="10" y="12.700" width="1.200" height="1.200"/></g><rect x="1" y="14.600" width="14" height="0.900" fill="#6f757c"/></svg>
<span class="t it" style="left:749.4px;top:278.84px;letter-spacing:-0.007px;">Phone and Modem</span>
<svg class="ic" style="left:729px;top:302px" viewBox="0 0 16 16"><circle cx="10.6" cy="5.7" r="5.8" fill="url(#gl)"/><path d="M6.25 3.0900000000000003q1.74 -2.32 4.06 -2.32q0.29 2.32 -1.74 3.48q-0.58 2.61 -2.61 2.9q-0.87 -1.74 0.29 -4.06Z" fill="#2fc02c"/><path d="M12.34 2.5100000000000002q2.61 0.58 3.48 3.48q-2.03 1.74 -4.06 -0.29Z" fill="#3fd03c"/><circle cx="10.6" cy="5.7" r="5.8" fill="url(#glh)"/><circle cx="4.700" cy="10.500" r="4.300" fill="#e9ecef" stroke="#8d949b" stroke-width="1"/><path d="M4.700 7.800V10.700H7" fill="none" stroke="#59616a" stroke-width="0.8"/></svg>
<span class="t it" style="left:749.4px;top:303.84px;letter-spacing:-0.289px;">Region</span>
<svg class="ic" style="left:729px;top:327px" viewBox="0 0 16 16"><g fill="none" stroke="#5d6682" stroke-width="1"><rect x="5.400" y="0.600" width="5.200" height="10.400" rx="2.200" fill="#f4f5f8"/><path d="M5.400 2.800h5.200M5.400 4.800h5.200M5.400 6.800h5.200M5.400 8.800h5.200" stroke-width="0.800"/><path d="M3.400 6.600q-0.400 5.400 2.800 6.200l0.600 2.600h2.400l0.600 -2.600q3.200 -0.800 2.800 -6.200"/><path d="M6.200 12.800h3.600"/></g></svg>
<span class="t it" style="left:749.4px;top:328.84px;letter-spacing:-0.179px;">Speech Recognition</span>
<svg class="ic" style="left:729px;top:352px" viewBox="0 0 16 16"><rect x="0.800" y="0.700" width="11.200" height="10.800" fill="#fff" stroke="#8a9098" stroke-width="0.9"/><rect x="8.600" y="1.200" width="1.800" height="0.900" fill="#e0413a"/><path d="M2.6 6.0L4.550000000000001 8.08L8.58 3.4" fill="none" stroke="#1b74c8" stroke-width="1.885"/><rect x="0.200" y="11.200" width="15.600" height="4.400" fill="#27385e"/><rect x="0.200" y="11.200" width="15.600" height="1.200" fill="#4a5d8a"/><g fill="#8fa0c4"><rect x="7.400" y="13" width="1.800" height="1.600"/><rect x="10.200" y="13" width="1.800" height="1.600"/><rect x="13" y="13" width="1.800" height="1.600"/></g></svg>
<span class="t it" style="left:749.4px;top:353.84px;letter-spacing:-0.137px;">Taskbar and Navigation</span>
<svg class="ic" style="left:729px;top:377px" viewBox="0 0 16 16"><rect x="0.9500000000000001" y="0.75" width="11.5" height="10.700000000000001" fill="#fff" stroke="#7f838a" stroke-width="1.1"/><rect x="1.5" y="1.3" width="10.399999999999999" height="2" fill="#afb3ba"/><rect x="8" y="1" width="1" height="0.900" fill="#fff"/><rect x="9.800" y="1" width="1" height="0.900" fill="#fff"/><path d="M1.8 7.0L3.0 8.280000000000001L5.4799999999999995 5.4" fill="none" stroke="#1b74c8" stroke-width="1.16"/><rect x="6.600" y="4.400" width="8.800" height="7" fill="#2a2f38"/><rect x="7.600" y="5.200" width="6.800" height="5.400" fill="#2a5fe0"/><path d="M7.600 5.200h4l2.800 4v1.400z" fill="#153aa6"/><path d="M5.200 11.400h11l0.400 4h-11.800z" fill="#23272e"/><g fill="#d8dade"><rect x="6.400" y="12.400" width="1.400" height="1.200"/><rect x="8.600" y="12.400" width="1.400" height="1.200"/><rect x="10.800" y="12.400" width="1.400" height="1.200"/><rect x="13" y="12.400" width="1.400" height="1.200"/></g><rect x="4.800" y="14.800" width="11.800" height="0.800" fill="#9aa0a8"/></svg>
<span class="t it" style="left:749.4px;top:378.84px;letter-spacing:0.068px;">Windows Mobility Centre</span>
<div class="abs" style="left:301px;top:239px;width:211px;height:47px;background:#fff;border:1px solid #767676;box-shadow:3px 3px 2px rgba(0,0,0,0.5)"></div>

<span class="t" style="left:21px;top:-1.16px;font-size:12px;line-height:14px;height:14px;color:#000;letter-spacing:-0.046px">All Control Panel Items</span>
<span class="t" style="left:138px;top:33.84px;font-size:12px;line-height:14px;height:14px;color:#000;letter-spacing:-0.094px">Control Panel</span>
<span class="t" style="left:233px;top:33.84px;font-size:12px;line-height:14px;height:14px;color:#000;letter-spacing:-0.046px">All Control Panel Items</span>
<span class="t" style="left:910px;top:33.84px;font-size:12px;line-height:14px;height:14px;color:#6d6d6d;letter-spacing:-0.229px">Search Control Panel</span>
<span class="t" style="left:9.2px;top:85.46px;font-size:16px;line-height:18px;height:18px;color:#0b339f;letter-spacing:-0.082px">Adjust your computer's settings</span>
<span class="t" style="left:900.2px;top:87.84px;font-size:12px;line-height:14px;height:14px;color:#4a586c;letter-spacing:-0.218px">View by:</span>
<span class="t" style="left:957.5px;top:87.84px;font-size:12px;line-height:14px;height:14px;color:#0b64d0;letter-spacing:-0.142px">Small icons</span>
<span class="t" style="left:307.6px;top:241.84px;font-size:12px;line-height:14px;height:14px;color:#575757;letter-spacing:-0.220px">Device Manager</span>
<span class="t" style="left:307.6px;top:256.84px;font-size:12px;line-height:14px;height:14px;color:#575757;letter-spacing:-0.096px">View and update your device</span>
<span class="t" style="left:307.6px;top:271.84px;font-size:12px;line-height:14px;height:14px;color:#575757;letter-spacing:-0.127px">hardware settings and driver software.</span>
</body></html>
